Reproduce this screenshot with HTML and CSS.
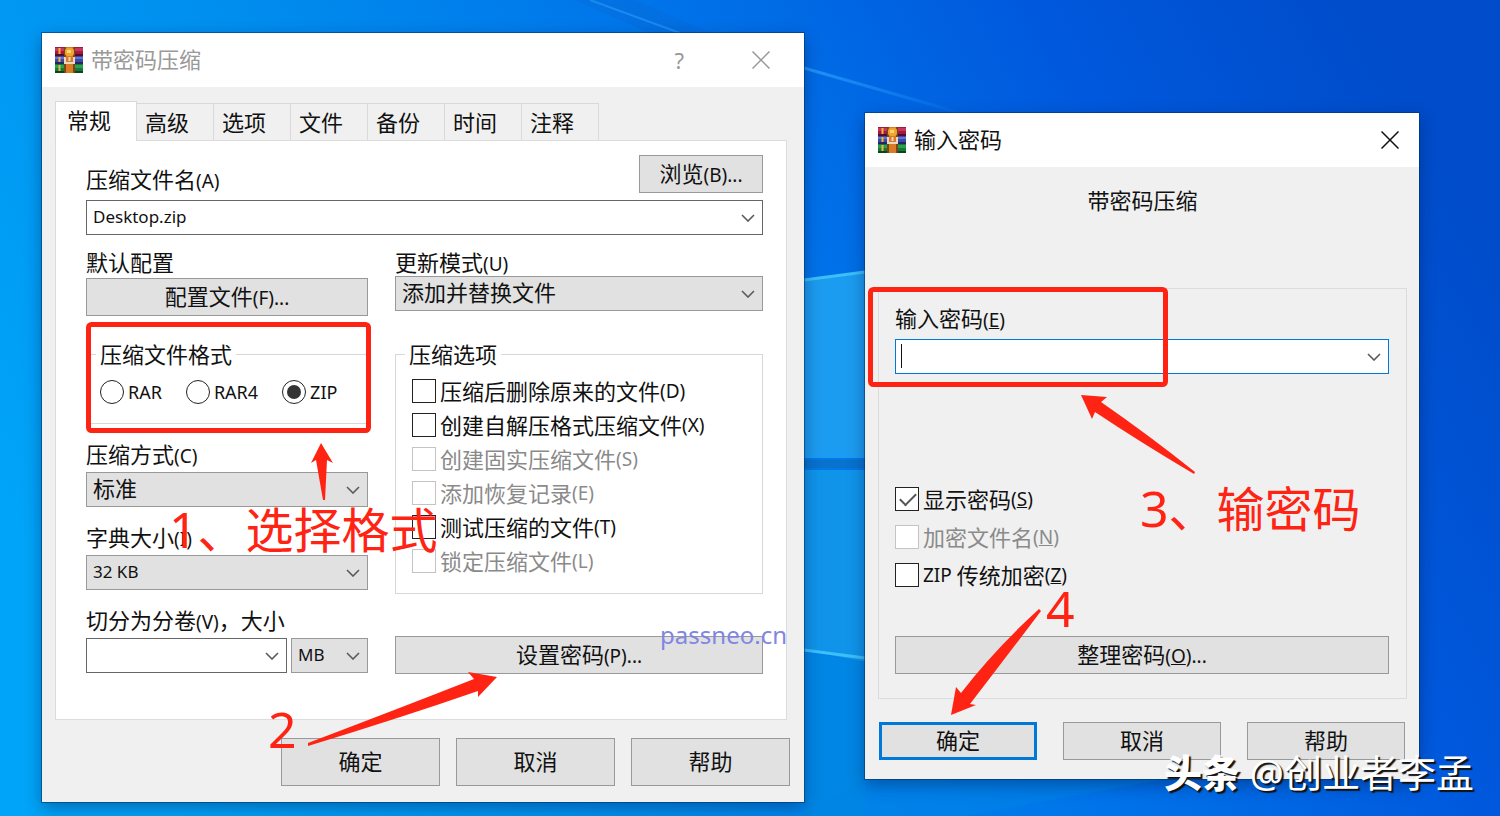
FILE: index.html
```html
<!DOCTYPE html>
<html lang="zh-CN">
<head>
  <meta charset="UTF-8">
  <meta name="viewport" content="width=device-width, initial-scale=1.0">
  <title>带密码压缩</title>
  <link rel="stylesheet" href="styles.css">
</head>
<body>

  <!-- shared icons -->
  <svg class="defs" width="0" height="0" aria-hidden="true">
    <symbol id="chevron" viewBox="0 0 14 8">
      <path d="M1 1l6 6 6-6" fill="none" stroke="#5a5a5a" stroke-width="1.6"/>
    </symbol>
    <symbol id="close" viewBox="0 0 18 18">
      <path d="M0.5 0.5l17 17M17.5 0.5l-17 17" fill="none" stroke="currentColor" stroke-width="1.5"/>
    </symbol>
    <symbol id="books" viewBox="0 0 28 26">
      <rect width="28" height="9" fill="#a3193f"/>
      <rect y="1" width="28" height="3" fill="#c8365c"/>
      <rect y="7" width="28" height="2" fill="#4d0f2c"/>
      <rect y="9" width="28" height="8" fill="#3d49a8"/>
      <rect y="10" width="28" height="2" fill="#6773cf"/>
      <rect y="15" width="28" height="2" fill="#222763"/>
      <rect y="17" width="28" height="9" fill="#157a35"/>
      <rect y="18" width="28" height="3" fill="#2da052"/>
      <rect y="24" width="28" height="2" fill="#0b4520"/>
      <path d="M4.5 1v6M4.5 10v5M4.5 18v6" stroke="#f1b63c" stroke-width="2"/>
      <rect x="9" width="11" height="26" fill="#7c431b"/>
      <rect x="11" width="7" height="26" fill="#d97a25"/>
      <rect x="10" y="1" width="9" height="8" rx="3" fill="#f0a52e"/>
      <rect x="12" y="3" width="4" height="3" fill="#ffd873"/>
      <path d="M10 10v6h9v-6" fill="none" stroke="#e8d8c4" stroke-width="2"/>
      <path d="M14.5 10v4" stroke="#e8d8c4" stroke-width="2"/>
    </symbol>
  </svg>

  <!-- wallpaper -->
  <svg class="wallpaper" viewBox="0 0 1500 816" preserveAspectRatio="none" aria-hidden="true">
    <defs>
      <linearGradient id="sky" x1="0" y1="0.6" x2="1" y2="0.3">
        <stop offset="0" stop-color="#00a4f8"/>
        <stop offset="0.3" stop-color="#008eee"/>
        <stop offset="0.56" stop-color="#0074ea"/>
        <stop offset="0.8" stop-color="#0058dc"/>
        <stop offset="1" stop-color="#004cca"/>
      </linearGradient>
      <linearGradient id="beam" gradientUnits="userSpaceOnUse" x1="804" y1="0" x2="970" y2="0">
        <stop offset="0" stop-color="#2da4ff" stop-opacity="0.7"/>
        <stop offset="1" stop-color="#2da4ff" stop-opacity="0"/>
      </linearGradient>
    </defs>
    <rect width="1500" height="816" fill="url(#sky)"/>
    <path d="M575 0h60l75 33h-60z" fill="#0a66d0" opacity="0.3"/>
    <path d="M590 0l90 33" stroke="#2da4ff" stroke-opacity="0.5" stroke-width="2"/>
    <path d="M804 68l160 46" stroke="url(#beam)" stroke-width="3" fill="none"/>
    <path d="M804 280l61-8v186h-61z" fill="#1c9cf0"/>
    <path d="M804 470h61v192l-61-12z" fill="#1094ea"/>
    <path d="M804 280l61-8M804 650l61 8" stroke="#3cc0f8" stroke-width="3"/>
    <path d="M804 464h61" stroke="#0872cc" stroke-width="8"/>
    <path d="M804 652l61 10v154h-61z" fill="#0086e4"/>
    <path d="M865 779h300l-200 37H804z" fill="#0084e6" opacity="0.5"/>
  </svg>

  <main class="desktop">

    <section class="window window-back">
      <header class="titlebar">
        <svg class="app-icon"><use href="#books"/></svg>
        <h1>带密码压缩</h1>
        <button type="button" class="title-button" aria-label="帮助">?</button>
        <button type="button" class="title-button" aria-label="关闭"><svg class="close-icon"><use href="#close"/></svg></button>
      </header>

      <form class="archive-form">
        <nav class="tabs">
          <button type="button" class="tab active">常规</button>
          <button type="button" class="tab">高级</button>
          <button type="button" class="tab">选项</button>
          <button type="button" class="tab">文件</button>
          <button type="button" class="tab">备份</button>
          <button type="button" class="tab">时间</button>
          <button type="button" class="tab">注释</button>
        </nav>

        <div class="panel">
          <div class="name-row">
            <label for="archiveName">压缩文件名<span class="key">(A)</span></label>
            <button type="button" class="btn browse">浏览<span class="key">(B)...</span></button>
          </div>
          <div class="combo editable">
            <input type="text" id="archiveName" name="archiveName" value="Desktop.zip">
            <svg class="chevron"><use href="#chevron"/></svg>
          </div>

          <div class="columns">
            <div class="column">
              <div class="label">默认配置</div>
              <button type="button" class="btn profiles">配置文件<span class="key">(F)...</span></button>

              <fieldset class="format">
                <legend>压缩文件格式</legend>
                <label><input type="radio" name="format" value="rar">RAR</label>
                <label><input type="radio" name="format" value="rar4">RAR4</label>
                <label><input type="radio" name="format" value="zip" checked>ZIP</label>
              </fieldset>

              <div class="field">
                <label for="method">压缩方式<span class="key">(C)</span></label>
                <div class="combo">
                  <select id="method" name="method" class="cjk"><option>标准</option></select>
                  <svg class="chevron"><use href="#chevron"/></svg>
                </div>
              </div>
              <div class="field">
                <label for="dictionary">字典大小<span class="key">(I)</span></label>
                <div class="combo">
                  <select id="dictionary" name="dictionary"><option>32 KB</option></select>
                  <svg class="chevron"><use href="#chevron"/></svg>
                </div>
              </div>
              <div class="field">
                <label for="volume">切分为分卷<span class="key">(V)</span>，大小</label>
                <div class="volume-row">
                  <div class="combo editable">
                    <input type="text" id="volume" name="volume">
                    <svg class="chevron"><use href="#chevron"/></svg>
                  </div>
                  <div class="combo unit">
                    <select name="unit" aria-label="单位"><option>MB</option></select>
                    <svg class="chevron"><use href="#chevron"/></svg>
                  </div>
                </div>
              </div>
            </div>

            <div class="column">
              <label class="label" for="updateMode">更新模式<span class="key">(U)</span></label>
              <div class="combo">
                <select id="updateMode" name="updateMode" class="cjk"><option>添加并替换文件</option></select>
                <svg class="chevron"><use href="#chevron"/></svg>
              </div>

              <fieldset class="options">
                <legend>压缩选项</legend>
                <label><input type="checkbox">压缩后删除原来的文件<span class="key">(D)</span></label>
                <label><input type="checkbox">创建自解压格式压缩文件<span class="key">(X)</span></label>
                <label class="off"><input type="checkbox" disabled>创建固实压缩文件<span class="key">(S)</span></label>
                <label class="off"><input type="checkbox" disabled>添加恢复记录<span class="key">(E)</span></label>
                <label><input type="checkbox">测试压缩的文件<span class="key">(T)</span></label>
                <label class="off"><input type="checkbox" disabled>锁定压缩文件<span class="key">(L)</span></label>
              </fieldset>

              <button type="button" class="btn set-password">设置密码<span class="key">(P)...</span></button>
            </div>
          </div>
        </div>

        <footer class="actions">
          <button type="submit" class="btn">确定</button>
          <button type="button" class="btn">取消</button>
          <button type="button" class="btn">帮助</button>
        </footer>
      </form>

      <!-- step marks 1 and 2 -->
      <svg class="arrows" viewBox="42 33 762 769" aria-hidden="true">
        <rect x="88.5" y="324.5" width="280" height="106" rx="3"/>
        <path d="M321 443L333 463L327 460L325 500H323L316 460L311 463z"/>
        <path d="M497 677L468 672L474 679Q400 708 308 743L308 746Q400 718 478 691L478 697z"/>
      </svg>
      <p class="note note-1"><b>1</b>、选择格式</p>
      <p class="note note-2"><b>2</b></p>
      <p class="site">passneo.cn</p>
    </section>

    <section class="window window-front">
      <header class="titlebar">
        <svg class="app-icon"><use href="#books"/></svg>
        <h1>输入密码</h1>
        <button type="button" class="title-button" aria-label="关闭"><svg class="close-icon"><use href="#close"/></svg></button>
      </header>

      <form class="password-form">
        <h2>带密码压缩</h2>
        <div class="group">
          <label for="password">输入密码<span class="key">(<u>E</u>)</span></label>
          <div class="combo editable focused">
            <input type="text" id="password" name="password">
            <span class="caret"></span>
            <svg class="chevron"><use href="#chevron"/></svg>
          </div>
          <div class="checks">
            <label><input type="checkbox" checked>显示密码<span class="key">(<u>S</u>)</span></label>
            <label class="off"><input type="checkbox" disabled>加密文件名<span class="key">(<u>N</u>)</span></label>
            <label><input type="checkbox"><span class="key">ZIP&nbsp;</span>传统加密<span class="key">(<u>Z</u>)</span></label>
          </div>
          <button type="button" class="btn">整理密码<span class="key">(<u>O</u>)...</span></button>
        </div>
        <footer class="actions">
          <button type="submit" class="btn default">确定</button>
          <button type="button" class="btn">取消</button>
          <button type="button" class="btn">帮助</button>
        </footer>
      </form>

      <!-- step marks 3 and 4 -->
      <svg class="arrows" viewBox="865 113 554 666" aria-hidden="true">
        <rect x="870.5" y="289.5" width="295" height="95" rx="3"/>
        <path d="M1081 395L1107 397L1101 402Q1150 436 1195 472L1194 474Q1140 442 1095 412L1092 419z"/>
        <path d="M951 715L956 687L961 693Q994 650 1039 609L1041 611Q1004 660 970 704L976 705z"/>
      </svg>
      <p class="note note-3"><b>3</b>、输密码</p>
      <p class="note note-4"><b>4</b></p>
    </section>

    <p class="credit"><strong>头条</strong> @创业者李孟</p>
  </main>

</body>
</html>
```

FILE: styles.css
```css
* { box-sizing: border-box; }

body {
  margin: 0;
  font-family: "Noto Sans", "Noto Sans CJK SC", sans-serif;
  font-size: 22px;
  line-height: 28px;
  color: #111;
  background-color: #0078e8;
}

h1, h2, p { margin: 0; font-weight: normal; }

button, input, select {
  font-family: inherit;
  color: inherit;
  margin: 0;
}

.defs { position: absolute; }

.wallpaper {
  position: absolute;
  top: 0;
  left: 0;
  width: 100%;
  height: 100%;
}

.desktop {
  position: relative;
  display: flex;
  align-items: flex-start;
  gap: 61px;
  min-height: 100vh;
  padding: 33px 81px 14px 42px;
}

/* windows */
.window {
  position: relative;
  background-color: #f0f0f0;
  box-shadow: 0 0 0 1px rgba(0, 50, 100, 0.55), 0 6px 16px rgba(0, 20, 70, 0.4);
}

.window-back { flex: 762 1 0; }

.window-front {
  flex: 554 1 0;
  margin-top: 80px;
}

.titlebar {
  display: flex;
  align-items: center;
  height: 54px;
  padding: 0 20px 0 13px;
  background-color: #fff;
}

.titlebar h1 {
  flex: 1;
  padding: 0 0 2px 8px;
  font-size: 22px;
}

.app-icon { width: 28px; height: 26px; }

.title-button {
  display: flex;
  justify-content: center;
  align-items: center;
  padding: 0;
  border: none;
  background: none;
  font-size: 22px;
}

.close-icon { width: 18px; height: 18px; }

.window-back .titlebar {
  padding-right: 34px;
  color: #999;
}

.window-back .title-button + .title-button { margin-left: 68px; }

/* controls */
.key {
  font-size: 19px;
  line-height: 20px;
}

.btn {
  height: 38px;
  padding: 0 0 2px;
  border: 1px solid #999;
  background-color: #e1e1e1;
  font-size: 22px;
  line-height: 28px;
}

.btn.default { border: 3px solid #0078d7; }

.combo {
  position: relative;
  height: 35px;
}

.combo input,
.combo select {
  display: block;
  width: 100%;
  height: 100%;
  padding: 0 30px 2px 6px;
  border: 1px solid #999;
  border-radius: 0;
  background-color: #e1e1e1;
  font-size: 17px;
  appearance: none;
  outline: none;
}

.combo .cjk { font-size: 22px; padding-bottom: 4px; }

.combo.editable input {
  border-color: #666;
  background-color: #fff;
}

.combo.focused input { border-color: #0078d7; }

.chevron {
  position: absolute;
  top: 14px;
  right: 8px;
  width: 14px;
  height: 8px;
}

.caret {
  position: absolute;
  top: 5px;
  left: 6px;
  width: 1px;
  height: 24px;
  background-color: #111;
}

input[type="radio"],
input[type="checkbox"] {
  appearance: none;
  flex: none;
  width: 24px;
  height: 24px;
  border: 1px solid #222;
  background-color: #fff;
}

input[type="radio"] {
  display: grid;
  place-items: center;
  border-radius: 50%;
}

input[type="radio"]:checked::before {
  content: "";
  width: 14px;
  height: 14px;
  border-radius: 50%;
  background-color: #333;
}

input[type="checkbox"]:checked::before {
  content: "";
  display: block;
  width: 14px;
  height: 7px;
  margin: 5px 0 0 4px;
  border-left: 2px solid #555;
  border-bottom: 2px solid #555;
  transform: rotate(-45deg);
}

input[type="checkbox"]:disabled { border-color: #c4c4c4; }

.off { color: #8a8a8a; }

/* archive window */
.archive-form { padding: 14px 14px 16px 13px; }

.tabs {
  display: flex;
  align-items: flex-end;
}

.tab {
  width: 77px;
  height: 37px;
  padding: 0 0 0 8px;
  border: 1px solid #d9d9d9;
  border-bottom: none;
  border-left-width: 0;
  background-color: #f0f0f0;
  font-size: 22px;
  line-height: 28px;
  text-align: left;
}

.tab.active {
  position: relative;
  width: 82px;
  height: 40px;
  margin-bottom: -1px;
  padding: 0 0 4px 11px;
  border-left-width: 1px;
  background-color: #fff;
}

.panel {
  margin-right: 3px;
  padding: 14px 23px 45px 30px;
  border: 1px solid #dcdcdc;
  background-color: #fff;
}

.name-row {
  display: flex;
  justify-content: space-between;
  align-items: flex-end;
  margin-bottom: 7px;
}

.browse { width: 124px; }

.columns {
  display: grid;
  grid-template-columns: 282fr 368fr;
  gap: 27px;
  margin-top: 13px;
}

.column {
  display: flex;
  flex-direction: column;
}

.profiles { margin-top: 2px; }

fieldset {
  min-width: 0;
  margin: 0;
  border: 1px solid #d8d8d8;
}

legend {
  margin-left: 9px;
  padding: 0 4px;
}

.format {
  display: flex;
  gap: 24px;
  height: 84px;
  margin-top: 24px;
  padding: 10px 0 0 13px;
}

.format legend { margin-left: -4px; }

.format label {
  display: flex;
  align-items: center;
  gap: 4px;
  height: 28px;
  font-size: 18px;
}

.field {
  display: flex;
  flex-direction: column;
  gap: 4px;
  margin-top: 16px;
}

.volume-row { display: flex; gap: 4px; }
.volume-row .editable { flex: 1; }
.unit { width: 77px; }

.options {
  display: flex;
  flex-direction: column;
  gap: 6px;
  height: 254px;
  margin-top: 29px;
  padding: 9px 0 14px 16px;
}

.options legend { margin-left: -7px; }

.options label,
.checks label {
  display: flex;
  align-items: center;
  height: 28px;
}

.options input,
.checks input { margin-right: 4px; }

.set-password { margin-top: 42px; }

.actions {
  display: flex;
  justify-content: flex-end;
  gap: 16px;
  margin-top: 18px;
}

.actions .btn {
  width: 159px;
  height: 48px;
}

/* password window */
.password-form { padding: 19px 12px 19px 13px; }

.password-form h2 {
  font-size: 22px;
  text-align: center;
}

.group {
  display: flex;
  flex-direction: column;
  margin-top: 74px;
  padding: 15px 17px 24px 16px;
  border: 1px solid #dcdcdc;
}

.group .combo { margin-top: 7px; }

.checks {
  display: flex;
  flex-direction: column;
  gap: 10px;
  margin-top: 111px;
  margin-bottom: 47px;
}

.password-form .actions {
  gap: 26px;
  margin: 23px 2px 0 0;
}

.password-form .actions .btn {
  width: 158px;
  height: 38px;
}

/* red marks over the windows */
.arrows {
  position: absolute;
  top: 0;
  left: 0;
  width: 100%;
  height: 100%;
  fill: #ff2313;
  pointer-events: none;
}

.arrows rect {
  fill: none;
  stroke: #ff2313;
  stroke-width: 5;
}

.note {
  position: absolute;
  color: #ff2313;
  font-size: 48px;
  line-height: 56px;
  white-space: nowrap;
}

.note b {
  font-size: 50px;
  font-weight: normal;
}

.note-1 { top: 468px; left: 127px; }
.note-2 { top: 668px; left: 226px; }
.note-3 { top: 367px; left: 275px; }
.note-4 { top: 467px; left: 181px; }

.site {
  position: absolute;
  top: 588px;
  right: 17px;
  color: #8086e2;
  font-size: 24px;
}

.credit {
  position: absolute;
  right: 26px;
  bottom: 20px;
  color: #fff;
  font-size: 38px;
  line-height: 48px;
  text-shadow: 2px 2px 1px #111;
}

.credit strong { font-weight: 900; }
```
